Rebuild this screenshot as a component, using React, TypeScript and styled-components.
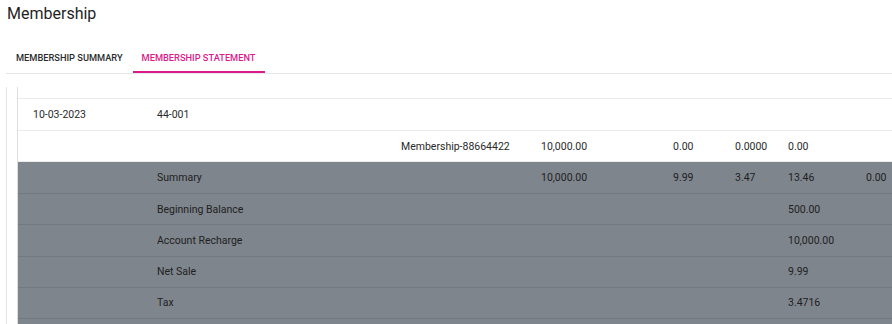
import React from "react";
import styled, { createGlobalStyle } from "styled-components";

const Global = createGlobalStyle`
  html, body { margin: 0; padding: 0; background: #ffffff; }
  body { font-family: Roboto, "Liberation Sans", Arial, sans-serif; overflow: hidden; }
`;

const Page = styled.div`
  width: 892px;
  height: 324px;
  overflow: hidden;
  background: #fff;
`;

const Title = styled.h1`
  margin: 0;
  padding-left: 7px;
  height: 28px;
  line-height: 28px;
  font-size: 16px;
  font-weight: 400;
  color: #1f1f1f;
`;

const TabBar = styled.div`
  display: flex;
  margin: 13px 0 0 6px;
  border-bottom: 1px solid #e6e6e6;
`;

const Tab = styled.div<{ $active?: boolean }>`
  height: 32px;
  padding: 0 ${(p) => (p.$active ? "9px" : "10px")};
  padding-top: 1px;
  display: flex;
  align-items: center;
  font-size: 9.25px;
  font-weight: 500;
  color: ${(p) => (p.$active ? "#dd1a8c" : "#2b2b2b")};
  box-shadow: ${(p) => (p.$active ? "inset 0 -2px 0 #dd1a8c" : "none")};
  box-sizing: border-box;
  white-space: nowrap;
`;

const Content = styled.div`
  margin: 13px 0 0 6px;
  border-left: 1px solid #e4e4e4;
  padding-left: 10px;
`;

const Table = styled.div`
  border-left: 1px solid #dedede;
  width: 1000px;
`;

const Row = styled.div<{ $shade?: boolean; $h: number }>`
  display: grid;
  grid-template-columns: 124px 244px 140px 132px 62px 53px 78px 1fr;
  align-items: center;
  height: ${(p) => p.$h}px;
  box-sizing: border-box;
  background: ${(p) => (p.$shade ? "#7f858d" : "#ffffff")};
  border-bottom: 1px solid ${(p) => (p.$shade ? "#737980" : "#ececec")};
  color: ${(p) => (p.$shade ? "#1e1f21" : "#2a2a2a")};
`;

const Cell = styled.div`
  padding-left: 15px;
  font-size: 10.5px;
  white-space: nowrap;
`;

type R = { cells: string[]; shade?: boolean; h: number };

const rows: R[] = [
  { cells: ["", "", "", "", "", "", "", ""], h: 12 },
  { cells: ["10-03-2023", "44-001", "", "", "", "", "", ""], h: 32 },
  { cells: ["", "", "Membership-88664422", "10,000.00", "0.00", "0.0000", "0.00", ""], h: 31 },
  { cells: ["", "Summary", "", "10,000.00", "9.99", "3.47", "13.46", "0.00"], shade: true, h: 32 },
  { cells: ["", "Beginning Balance", "", "", "", "", "500.00", ""], shade: true, h: 31.25 },
  { cells: ["", "Account Recharge", "", "", "", "", "10,000.00", ""], shade: true, h: 31.25 },
  { cells: ["", "Net Sale", "", "", "", "", "9.99", ""], shade: true, h: 31.25 },
  { cells: ["", "Tax", "", "", "", "", "3.4716", ""], shade: true, h: 31.25 },
  { cells: ["", "", "", "", "", "", "", ""], shade: true, h: 31.25 },
];

export default function App() {
  return (
    <Page>
      <Global />
      <Title>Membership</Title>
      <TabBar>
        <Tab>MEMBERSHIP SUMMARY</Tab>
        <Tab $active>MEMBERSHIP STATEMENT</Tab>
      </TabBar>
      <Content>
        <Table>
          {rows.map((r, i) => (
            <Row key={i} $shade={r.shade} $h={r.h}>
              {r.cells.map((c, j) => (
                <Cell key={j}>{c}</Cell>
              ))}
            </Row>
          ))}
        </Table>
      </Content>
    </Page>
  );
}
